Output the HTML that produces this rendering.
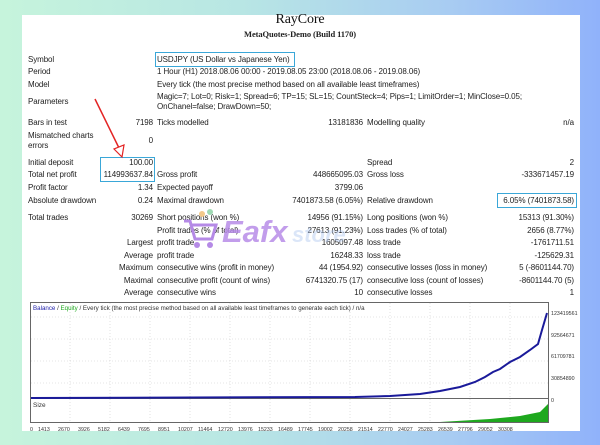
<!DOCTYPE html>
<html><head><meta charset="utf-8"><style>
*{margin:0;padding:0;box-sizing:border-box}
body{width:600px;height:445px;overflow:hidden;background:linear-gradient(90deg,#c6f4dc 0%,#b8e6e4 40%,#a8ccf2 75%,#90b2fa 100%);font-family:"Liberation Sans",sans-serif;position:relative}
.p{position:absolute;left:22px;top:15px;width:558px;height:416px;background:#fff}
.t{position:absolute;font-size:8px;letter-spacing:-0.1px;color:#222;white-space:nowrap;line-height:10px}
.r{text-align:right}
.box{position:absolute;border:1px solid #3aa7d8}
</style></head><body>
<div class="p"></div>
<div class="t" style="left:0;width:600px;text-align:center;top:11px;font-family:'Liberation Serif',serif;font-size:14px;line-height:17px;color:#111">RayCore</div>
<div class="t" style="left:0;width:600px;text-align:center;top:29px;font-family:'Liberation Serif',serif;font-weight:bold;font-size:8.5px">MetaQuotes-Demo (Build 1170)</div>

<div class="t" style="left:28px;top:55px">Symbol</div>
<div class="t" style="left:157px;top:55px">USDJPY (US Dollar vs Japanese Yen)</div>
<div class="box" style="left:155px;top:52px;width:140px;height:15px"></div>
<div class="t" style="left:28px;top:67px">Period</div>
<div class="t" style="left:157px;top:67px">1 Hour (H1) 2018.08.06 00:00 - 2019.08.05 23:00 (2018.08.06 - 2019.08.06)</div>
<div class="t" style="left:28px;top:80px">Model</div>
<div class="t" style="left:157px;top:80px">Every tick (the most precise method based on all available least timeframes)</div>
<div class="t" style="left:28px;top:97px">Parameters</div>
<div class="t" style="left:157px;top:92px">Magic=7; Lot=0; Risk=1; Spread=6; TP=15; SL=15; CountSteck=4; Pips=1; LimitOrder=1; MinClose=0.05;</div>
<div class="t" style="left:157px;top:102px">OnChanel=false; DrawDown=50;</div>
<div class="t" style="left:28px;top:118px">Bars in test</div>
<div class="t r" style="left:100px;width:53px;top:118px">7198</div>
<div class="t" style="left:157px;top:118px">Ticks modelled</div>
<div class="t r" style="left:300px;width:63px;top:118px">13181836</div>
<div class="t" style="left:367px;top:118px">Modelling quality</div>
<div class="t r" style="left:520px;width:54px;top:118px">n/a</div>
<div class="t" style="left:28px;top:131px">Mismatched charts</div>
<div class="t" style="left:28px;top:141px">errors</div>
<div class="t r" style="left:100px;width:53px;top:136px">0</div>

<div class="t" style="left:28px;top:158px">Initial deposit</div>
<div class="t r" style="left:100px;width:53px;top:158px">100.00</div>
<div class="t" style="left:367px;top:158px">Spread</div>
<div class="t r" style="left:520px;width:54px;top:158px">2</div>
<div class="t" style="left:28px;top:170px">Total net profit</div>
<div class="t r" style="left:90px;width:63px;top:170px">114993637.84</div>
<div class="box" style="left:100px;top:157px;width:55px;height:25px"></div>
<div class="t" style="left:157px;top:170px">Gross profit</div>
<div class="t r" style="left:290px;width:73px;top:170px">448665095.03</div>
<div class="t" style="left:367px;top:170px">Gross loss</div>
<div class="t r" style="left:500px;width:74px;top:170px">-333671457.19</div>
<div class="t" style="left:28px;top:183px">Profit factor</div>
<div class="t r" style="left:100px;width:53px;top:183px">1.34</div>
<div class="t" style="left:157px;top:183px">Expected payoff</div>
<div class="t r" style="left:290px;width:73px;top:183px">3799.06</div>
<div class="t" style="left:28px;top:196px">Absolute drawdown</div>
<div class="t r" style="left:100px;width:53px;top:196px">0.24</div>
<div class="t" style="left:157px;top:196px">Maximal drawdown</div>
<div class="t r" style="left:260px;width:103px;top:196px">7401873.58 (6.05%)</div>
<div class="t" style="left:367px;top:196px">Relative drawdown</div>
<div class="t r" style="left:480px;width:94px;top:196px">6.05% (7401873.58)</div>
<div class="box" style="left:497px;top:193px;width:80px;height:15px"></div>

<div class="t" style="left:28px;top:213px">Total trades</div>
<div class="t r" style="left:100px;width:53px;top:213px">30269</div>
<div class="t" style="left:157px;top:213px">Short positions (won %)</div>
<div class="t r" style="left:260px;width:103px;top:213px">14956 (91.15%)</div>
<div class="t" style="left:367px;top:213px">Long positions (won %)</div>
<div class="t r" style="left:480px;width:94px;top:213px">15313 (91.30%)</div>
<div class="t" style="left:157px;top:226px">Profit trades (% of total)</div>
<div class="t r" style="left:260px;width:103px;top:226px">27613 (91.23%)</div>
<div class="t" style="left:367px;top:226px">Loss trades (% of total)</div>
<div class="t r" style="left:480px;width:94px;top:226px">2656 (8.77%)</div>
<div class="t r" style="left:60px;width:93px;top:238px">Largest</div>
<div class="t" style="left:157px;top:238px">profit trade</div>
<div class="t r" style="left:260px;width:103px;top:238px">1605097.48</div>
<div class="t" style="left:367px;top:238px">loss trade</div>
<div class="t r" style="left:480px;width:94px;top:238px">-1761711.51</div>
<div class="t r" style="left:60px;width:93px;top:251px">Average</div>
<div class="t" style="left:157px;top:251px">profit trade</div>
<div class="t r" style="left:260px;width:103px;top:251px">16248.33</div>
<div class="t" style="left:367px;top:251px">loss trade</div>
<div class="t r" style="left:480px;width:94px;top:251px">-125629.31</div>
<div class="t r" style="left:60px;width:93px;top:263px">Maximum</div>
<div class="t" style="left:157px;top:263px">consecutive wins (profit in money)</div>
<div class="t r" style="left:260px;width:103px;top:263px">44 (1954.92)</div>
<div class="t" style="left:367px;top:263px">consecutive losses (loss in money)</div>
<div class="t r" style="left:480px;width:94px;top:263px">5 (-8601144.70)</div>
<div class="t r" style="left:60px;width:93px;top:276px">Maximal</div>
<div class="t" style="left:157px;top:276px">consecutive profit (count of wins)</div>
<div class="t r" style="left:260px;width:103px;top:276px">6741320.75 (17)</div>
<div class="t" style="left:367px;top:276px">consecutive loss (count of losses)</div>
<div class="t r" style="left:480px;width:94px;top:276px">-8601144.70 (5)</div>
<div class="t r" style="left:60px;width:93px;top:288px">Average</div>
<div class="t" style="left:157px;top:288px">consecutive wins</div>
<div class="t r" style="left:260px;width:103px;top:288px">10</div>
<div class="t" style="left:367px;top:288px">consecutive losses</div>
<div class="t r" style="left:480px;width:94px;top:288px">1</div>

<svg style="position:absolute;left:180px;top:207px" width="200" height="45">
<g fill="none" stroke="#b58ae6" stroke-width="3"><path d="M4 14 H10 L15 32 H32 L36 18 H12"/></g>
<circle cx="17" cy="38" r="3" fill="#b58ae6"/><circle cx="30" cy="38" r="3" fill="#b58ae6"/>
<circle cx="22" cy="7" r="3" fill="#f3c98a"/><circle cx="30" cy="5" r="3" fill="#9fd9b3"/>
<text x="42" y="35" font-family="Liberation Sans" font-weight="bold" font-style="italic" font-size="31" fill="#b78ce8" fill-opacity="0.85">Eafx</text>
<text x="112" y="35" font-family="Liberation Sans" font-weight="bold" font-style="italic" font-size="22" fill="#b0c8f0" fill-opacity="0.45">store</text>
</svg>

<svg style="position:absolute;left:0;top:0" width="600" height="445">
<line x1="95" y1="99" x2="119" y2="148" stroke="#e32424" stroke-width="1.5"/>
<path d="M114 149 L122 157 L124 145 Z" fill="#fff" stroke="#e32424" stroke-width="1.2"/>
</svg>

<svg style="position:absolute;left:0;top:0" width="600" height="445">
<rect x="30.5" y="302.5" width="518" height="120" fill="#fff" stroke="#666"/>
<line x1="30" y1="398.5" x2="549" y2="398.5" stroke="#666"/>
<g stroke="#ccc" stroke-dasharray="1,2" stroke-width="0.6">
<line x1="31" y1="317" x2="548" y2="317"/><line x1="31" y1="339" x2="548" y2="339"/><line x1="31" y1="361" x2="548" y2="361"/><line x1="31" y1="383" x2="548" y2="383"/>
<line x1="70" y1="303" x2="70" y2="422"/><line x1="110" y1="303" x2="110" y2="422"/><line x1="150" y1="303" x2="150" y2="422"/><line x1="190" y1="303" x2="190" y2="422"/><line x1="230" y1="303" x2="230" y2="422"/><line x1="270" y1="303" x2="270" y2="422"/><line x1="310" y1="303" x2="310" y2="422"/><line x1="350" y1="303" x2="350" y2="422"/><line x1="390" y1="303" x2="390" y2="422"/><line x1="430" y1="303" x2="430" y2="422"/><line x1="470" y1="303" x2="470" y2="422"/><line x1="510" y1="303" x2="510" y2="422"/>
</g>
<path d="M31 398 L355 397 L390 396 L420 394 L440 391 L460 387 L475 382 L485 377 L493 372 L500 369 L510 362 L520 357 L530 350 L538 344 L542 330 L547 313" fill="none" stroke="#1a1a9a" stroke-width="2"/>
<path d="M440 422 L490 419 L520 416 L540 412 L548 404 L548 422 Z" fill="#1ea81e"/>
<text x="33" y="310" font-family="Liberation Sans" font-size="6.2" fill="#333"><tspan fill="#2222aa">Balance</tspan> / <tspan fill="#22aa22">Equity</tspan> / Every tick (the most precise method based on all available least timeframes to generate each tick) / n/a</text>
<text x="33" y="407" font-family="Liberation Sans" font-size="6.5" fill="#333">Size</text>
<g font-family="Liberation Sans" font-size="5.3" fill="#333">
<text x="551" y="315">123419561</text><text x="551" y="337">92564671</text><text x="551" y="358">61709781</text><text x="551" y="380">30854890</text><text x="551" y="402">0</text>
<text y="431"><tspan x="30">0</tspan><tspan x="38">1413</tspan><tspan x="58">2670</tspan><tspan x="78">3926</tspan><tspan x="98">5182</tspan><tspan x="118">6439</tspan><tspan x="138">7695</tspan><tspan x="158">8951</tspan><tspan x="178">10207</tspan><tspan x="198">11464</tspan><tspan x="218">12720</tspan><tspan x="238">13976</tspan><tspan x="258">15233</tspan><tspan x="278">16489</tspan><tspan x="298">17745</tspan><tspan x="318">19002</tspan><tspan x="338">20258</tspan><tspan x="358">21514</tspan><tspan x="378">22770</tspan><tspan x="398">24027</tspan><tspan x="418">25283</tspan><tspan x="438">26539</tspan><tspan x="458">27796</tspan><tspan x="478">29052</tspan><tspan x="498">30308</tspan></text>
</g>
</svg>
</body></html>
